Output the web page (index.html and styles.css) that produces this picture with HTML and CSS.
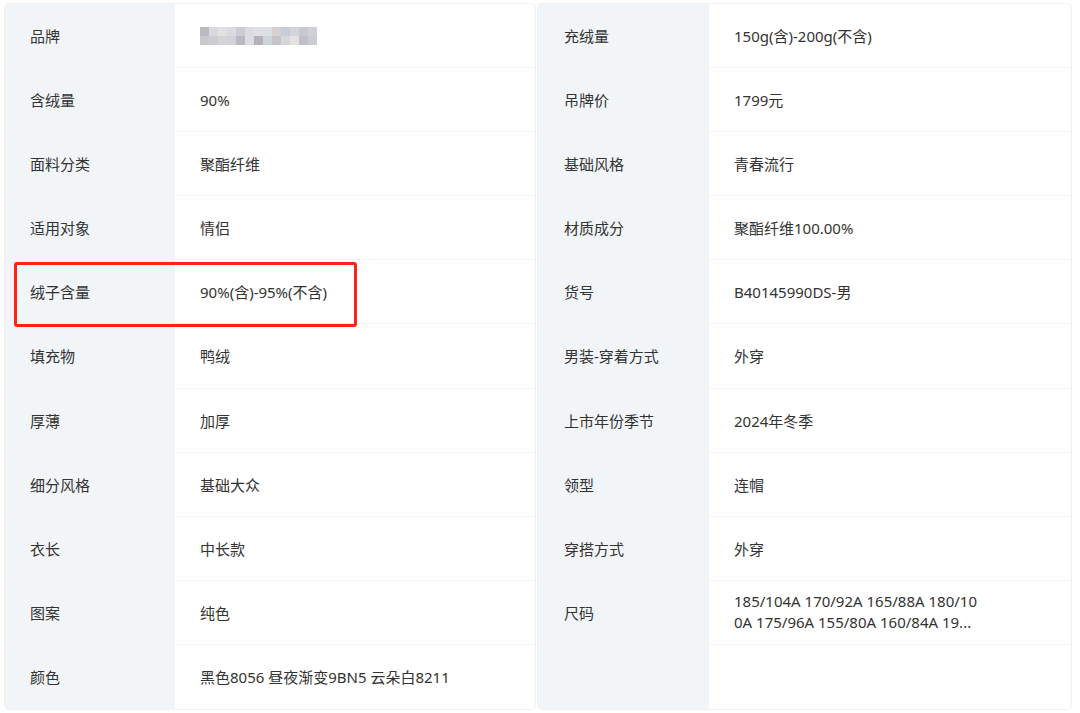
FILE: index.html
```html
<!DOCTYPE html>
<html lang="zh-CN">
<head>
<meta charset="utf-8">
<title>商品参数</title>
<link rel="stylesheet" href="styles.css">
</head>
<body>
<div class="wrap">
  <div class="card">
    <div class="row"><div class="label">品牌</div><div class="value"><div class="mosaic">
      <i style="background:#b9bbc0"></i><i style="background:#d8d9dd"></i><i style="background:#e2e2e3"></i><i style="background:#d9dbe0"></i><i style="background:#cdcbd4"></i><i style="background:#dcdbe1"></i><i style="background:#dfe0e3"></i><i style="background:#dcdfe3"></i><i style="background:#d6d0d1"></i><i style="background:#c8ccd6"></i><i style="background:#d4d5da"></i><i style="background:#c8c8d0"></i><i style="background:#d0d1d5"></i>
      <i style="background:#c8c9cd"></i><i style="background:#cdcdd1"></i><i style="background:#d6d5d6"></i><i style="background:#d2d3d6"></i><i style="background:#b9b9c1"></i><i style="background:#dedcde"></i><i style="background:#b3b3b7"></i><i style="background:#cfd4da"></i><i style="background:#c7c4c8"></i><i style="background:#d5d7db"></i><i style="background:#e5e3e2"></i><i style="background:#c1c0c8"></i><i style="background:#cbccd1"></i>
    </div></div></div>
    <div class="row"><div class="label">含绒量</div><div class="value">90%</div></div>
    <div class="row"><div class="label">面料分类</div><div class="value">聚酯纤维</div></div>
    <div class="row"><div class="label">适用对象</div><div class="value">情侣</div></div>
    <div class="row"><div class="label">绒子含量</div><div class="value">90%(含)-95%(不含)</div></div>
    <div class="row"><div class="label">填充物</div><div class="value">鸭绒</div></div>
    <div class="row"><div class="label">厚薄</div><div class="value">加厚</div></div>
    <div class="row"><div class="label">细分风格</div><div class="value">基础大众</div></div>
    <div class="row"><div class="label">衣长</div><div class="value">中长款</div></div>
    <div class="row"><div class="label">图案</div><div class="value">纯色</div></div>
    <div class="row"><div class="label">颜色</div><div class="value">黑色8056 昼夜渐变9BN5 云朵白8211</div></div>
  </div>
  <div class="card card-right">
    <div class="row"><div class="label">充绒量</div><div class="value">150g(含)-200g(不含)</div></div>
    <div class="row"><div class="label">吊牌价</div><div class="value">1799元</div></div>
    <div class="row"><div class="label">基础风格</div><div class="value">青春流行</div></div>
    <div class="row"><div class="label">材质成分</div><div class="value">聚酯纤维100.00%</div></div>
    <div class="row"><div class="label">货号</div><div class="value">B40145990DS-男</div></div>
    <div class="row"><div class="label">男装-穿着方式</div><div class="value">外穿</div></div>
    <div class="row"><div class="label">上市年份季节</div><div class="value">2024年冬季</div></div>
    <div class="row"><div class="label">领型</div><div class="value">连帽</div></div>
    <div class="row"><div class="label">穿搭方式</div><div class="value">外穿</div></div>
    <div class="row"><div class="label">尺码</div><div class="value"><span class="wraptext">185/104A 170/92A 165/88A 180/10<br>0A 175/96A 155/80A 160/84A 19...</span></div></div>
    <div class="row"><div class="label"></div><div class="value"></div></div>
  </div>
  <div class="highlight"></div>
</div>
</body>
</html>
```

FILE: styles.css
```css
html, body {
  margin: 0;
  padding: 0;
  background: #ffffff;
}
body {
  font-family: "Noto Sans", "Noto Sans CJK SC", sans-serif;
  font-size: 15px;
  color: #333333;
}
.wrap {
  position: relative;
  display: grid;
  grid-template-columns: 532px 535px;
  column-gap: 1px;
  padding: 3px 0 0 4px;
  width: 1068px;
}
.card {
  height: 707px;
  border: 1px solid #f0f0f0;
  border-radius: 5px;
  box-sizing: border-box;
  overflow: hidden;
  display: grid;
  grid-template-rows: repeat(11, 1fr);
}
.row {
  display: grid;
  grid-template-columns: 170px 1fr;
  border-bottom: 1px solid #f3f4f6;
}
.card-right .row {
  grid-template-columns: 171px 1fr;
}
.row:last-child {
  border-bottom: none;
}
.label {
  background: #f2f5f8;
  display: flex;
  align-items: center;
  padding-left: 25px;
  white-space: nowrap;
}
.card-right .label {
  padding-left: 26px;
}
.value {
  display: flex;
  align-items: center;
  padding-left: 25px;
  padding-right: 20px;
  white-space: nowrap;
}
.wraptext {
  line-height: 21px;
}
.mosaic {
  display: grid;
  grid-template-columns: repeat(13, 9px);
  grid-template-rows: repeat(2, 9px);
  width: 118px;
  overflow: hidden;
  filter: blur(0.3px);
}
.mosaic i {
  display: block;
}
.highlight {
  position: absolute;
  left: 14px;
  top: 262px;
  width: 343px;
  height: 65px;
  border: 3px solid #ff2218;
  border-radius: 3px;
  box-sizing: border-box;
}
```
